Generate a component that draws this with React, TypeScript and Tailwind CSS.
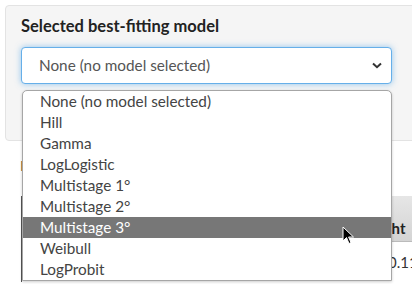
import React from "react";

const options = [
  "None (no model selected)",
  "Hill",
  "Gamma",
  "LogLogistic",
  "Multistage 1°",
  "Multistage 2°",
  "Multistage 3°",
  "Weibull",
  "LogProbit",
];

export default function App() {
  return (
    <div className="relative h-[284px] w-[412px] overflow-hidden bg-white font-['Lato',sans-serif] text-[#333]">
      {/* Well */}
      <div className="ml-[5px] mt-[5px] h-[136px] w-[420px] rounded-l border border-[#e3e3e3] bg-[#f5f5f5] pl-[15px] pt-[9px]">
        <div className="text-[16.5px] font-bold leading-[22px] text-[#222]">Selected best-fitting model</div>
        <div className="mt-[10px] flex h-[37px] w-[371px] items-center justify-between rounded border border-[#66afe9] bg-white pl-[17px] pr-[9px] text-[15.3px] text-[#555] shadow-[0_0_6px_rgba(102,175,233,0.7)]">
          <span>None (no model selected)</span>
          <svg width="10" height="7" viewBox="0 0 10 7" className="text-[#333]">
            <path d="M1 1.5 L5 5.2 L9 1.5" fill="none" stroke="currentColor" strokeWidth="2" />
          </svg>
        </div>
      </div>

      <div className="pl-[20px] pt-[15px] text-[14px] leading-[20px] text-[#8a6d3b]">I</div>

      {/* Table */}
      <div className="ml-[21px] mt-[20px] w-[420px] border-l border-[#555]">
        <div className="flex h-[46px] items-end border-b border-[#bbb] bg-gradient-to-b from-[#e6e6e6] to-[#d4d4d4] pb-[2px]">
          <span className="ml-[335px] text-[15px] font-bold text-[#222]">Weight</span>
        </div>
        <div className="flex h-[40px] items-center">
          <span className="ml-[366px] text-[15px] text-[#333]">0.1152</span>
        </div>
      </div>

      {/* Native select popup */}
      <div className="absolute left-[22px] top-[90px] w-[370px] rounded-t-[5px] border border-[#a6a6a6] bg-white shadow-[0_1px_3px_rgba(0,0,0,0.2)]">
        {options.map((o) => (
          <div
            key={o}
            className={
              o === "Multistage 3°"
                ? "h-[21px] bg-[#777] pl-[17px] text-[15.3px] leading-[21px] text-white"
                : "h-[21px] pl-[17px] text-[15.3px] leading-[21px] text-[#444]"
            }
          >
            {o}
          </div>
        ))}
      </div>

      {/* Mouse cursor */}
      <svg className="absolute left-[342px] top-[226px]" width="14" height="20" viewBox="0 0 14 20">
        <path d="M1 1 L1 15 L4.5 11.5 L7 17.5 L9 16.6 L6.6 11 L11.5 11 Z" fill="#000" stroke="#fff" strokeWidth="1" />
      </svg>
    </div>
  );
}
